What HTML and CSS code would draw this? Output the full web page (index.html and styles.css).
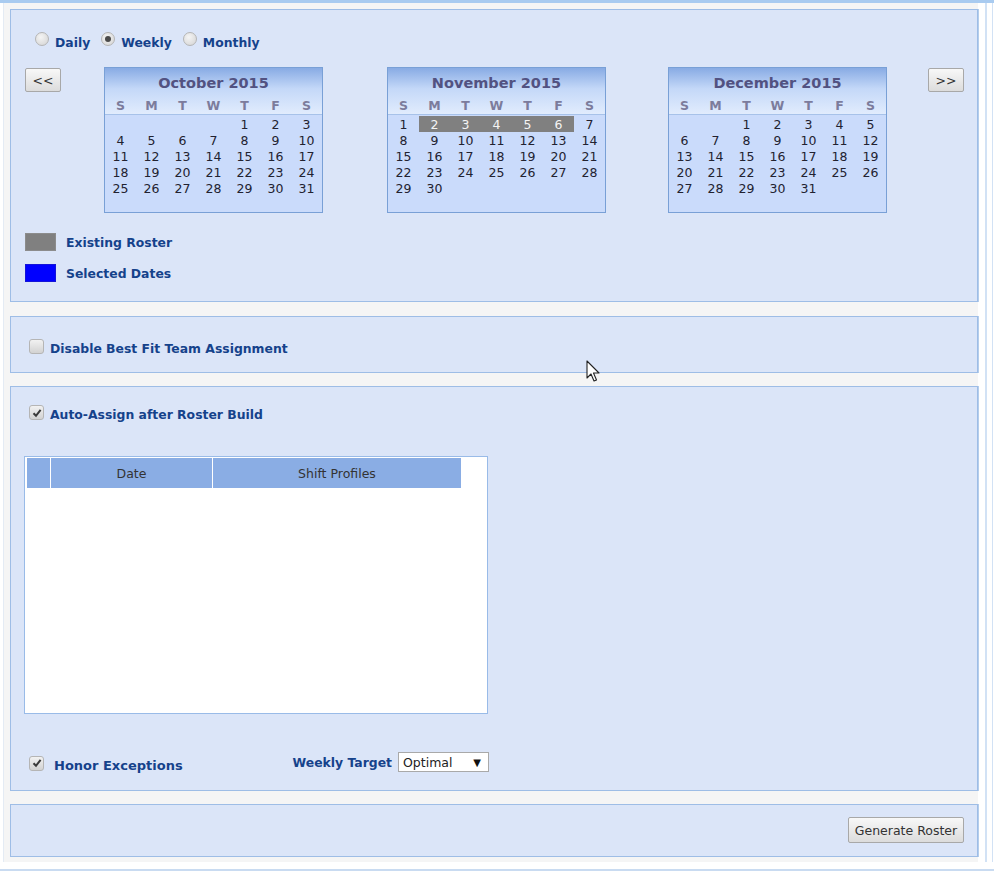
FILE: index.html
```html
<!DOCTYPE html>
<html lang="en">
<head>
  <meta charset="UTF-8" />
  <title>Roster Builder</title>
  <link rel="stylesheet" href="styles.css">
</head>
<body>
  <div class="frame">
    <div class="outer">

      <!-- date range -->
      <div class="panel panel-dates">
        <div class="modes">
          <label class="opt"><span class="radio"></span>Daily</label>
          <label class="opt"><span class="radio on"></span>Weekly</label>
          <label class="opt"><span class="radio"></span>Monthly</label>
        </div>

        <div class="months">
          <button class="btn nav">&lt;&lt;</button>
          <div class="cal" id="cal-oct"></div>
          <div class="cal" id="cal-nov"></div>
          <div class="cal" id="cal-dec"></div>
          <button class="btn nav next">&gt;&gt;</button>
        </div>

        <div class="legend">
          <div class="legend-row"><span class="swatch grey"></span>Existing Roster</div>
          <div class="legend-row"><span class="swatch blue"></span>Selected Dates</div>
        </div>
      </div>

      <div class="panel panel-fit">
        <label class="chk"><span class="box"></span>Disable Best Fit Team Assignment</label>
      </div>

      <div class="panel panel-assign">
        <label class="chk"><span class="box checked"><svg viewBox="0 0 10 10"><path d="M1.5 5.2 L4 7.8 L8.6 1.8" /></svg></span>Auto-Assign after Roster Build</label>

        <div class="grid">
          <div class="grid-head">
            <div class="gh gh-sel"></div>
            <div class="gh gh-date">Date</div>
            <div class="gh gh-shift">Shift Profiles</div>
          </div>
        </div>

        <div class="options">
          <label class="chk honor"><span class="box checked"><svg viewBox="0 0 10 10"><path d="M1.5 5.2 L4 7.8 L8.6 1.8" /></svg></span>Honor Exceptions</label>
          <div class="target">
            <span class="target-label">Weekly Target</span>
            <div class="select"><span>Optimal</span><span class="arrow">&#9660;</span></div>
          </div>
        </div>
      </div>

      <div class="panel panel-actions">
        <button class="btn generate">Generate Roster</button>
      </div>

    </div>
    <div class="rail"></div>
  </div>

  <svg class="cursor" width="14" height="23" viewBox="0 0 14 23">
    <path d="M1 1 L1 18 L5 14 L8 21 L10.5 20 L7.5 13 L13 13 Z" fill="#fff" stroke="#222" stroke-width="1.1" stroke-linejoin="round" />
  </svg>

  <script>
    const months = [
      { id: "cal-oct", title: "October 2015", start: 4, days: 31 },
      { id: "cal-nov", title: "November 2015", start: 0, days: 30, existing: [2, 3, 4, 5, 6] },
      { id: "cal-dec", title: "December 2015", start: 2, days: 31 }
    ];
    const letters = ["S", "M", "T", "W", "T", "F", "S"];

    months.forEach(m => {
      const el = document.getElementById(m.id);
      let html = '<div class="cal-head"><div class="cal-title">' + m.title + '</div><div class="cal-days">';
      letters.forEach(l => { html += "<span>" + l + "</span>"; });
      html += '</div></div><div class="cal-body">';
      for (let i = 0; i < m.start; i++) html += "<span></span>";
      for (let d = 1; d <= m.days; d++) {
        const ex = m.existing && m.existing.includes(d);
        html += '<span' + (ex ? ' class="ex"' : '') + '>' + d + '</span>';
      }
      html += "</div>";
      el.innerHTML = html;
    });
  </script>
</body>
</html>
```

FILE: styles.css
```css
body {
  margin: 0;
  background: #fff;
  font-family: "DejaVu Sans", Verdana, sans-serif;
  color: #15428b;
  position: relative;
}
.frame {
  display: flex;
  border-top: 3px solid #a9cbf0;
  border-bottom: 2px solid #c9dbf1;
  padding-bottom: 7px;
  width: 994px;
  box-sizing: border-box;
}
.outer {
  margin-left: 3px;
  width: 975px;
  border-left: 1px solid #e4ebf4;
  background: #f5f5f5;
  padding: 6px 0 5px 6px;
  box-sizing: border-box;
}
.rail {
  margin-left: 7px;
  width: 5px;
  border-left: 2px solid #d2e2f5;
  border-right: 1px solid #d2e2f5;
}
.panel {
  background: #dbe5f8;
  border: 1px solid #9ebde6;
  box-shadow: 1px 0 0 #b4cdec;
}
.panel + .panel {
  margin-top: 13px;
}

/* top panel */
.panel-dates {
  height: 293px;
  box-sizing: border-box;
  padding: 22px 13px 0 14px;
}
.modes {
  display: flex;
  padding-left: 10px;
  height: 18px;
  align-items: center;
}
.opt {
  display: flex;
  align-items: center;
  font-weight: bold;
  font-size: 12.4px;
  margin-right: 11px;
  position: relative;
  top: 1px;
}
.radio {
  width: 14px;
  height: 14px;
  border-radius: 50%;
  border: 1px solid #b5b5b5;
  background: radial-gradient(circle at 40% 35%, #f4f4f4, #d3d3d3);
  margin-right: 6px;
  position: relative;
  top: -3px;
  box-sizing: border-box;
}
.radio.on::after {
  content: "";
  position: absolute;
  left: 3px;
  top: 3px;
  width: 6px;
  height: 6px;
  border-radius: 50%;
  background: #4a4a4a;
}
.months {
  display: flex;
  align-items: flex-start;
  margin-top: 17px;
}
.btn {
  font-family: "DejaVu Sans", Verdana, sans-serif;
  font-size: 12.5px;
  color: #333;
  border: 1px solid #a8a8a8;
  border-radius: 2px;
  background: linear-gradient(#f8f8f8, #dcdcdc);
  padding: 0;
  cursor: pointer;
}
.nav {
  width: 36px;
  height: 24px;
  margin-top: 1px;
}
.nav.next {
  margin-left: auto;
}
.cal {
  width: 219px;
  border: 1px solid #79a0d6;
  background: #cadbfb;
  box-sizing: border-box;
}
#cal-oct { margin-left: 43px; }
#cal-nov { margin-left: 64px; }
#cal-dec { margin-left: 62px; }
.cal-head {
  background: linear-gradient(#88abe4, #c4d8f8 45%, #e1ecfd);
  border-bottom: 1px solid #a7c2e9;
  padding-top: 5px;
  height: 41px;
}
.cal-title {
  text-align: center;
  font-weight: bold;
  font-size: 14.5px;
  line-height: 20px;
  color: #525281;
}
.cal-days {
  display: grid;
  grid-template-columns: repeat(7, 31px);
  margin-top: 5px;
}
.cal-days span {
  text-align: center;
  font-weight: bold;
  font-size: 12.5px;
  line-height: 16px;
  color: #7c7c9c;
}
.cal-body {
  display: grid;
  grid-template-columns: repeat(7, 31px);
  grid-auto-rows: 16px;
  padding: 1px 0 16px;
}
.cal-body span {
  text-align: center;
  font-size: 12.5px;
  line-height: 17px;
  color: #222230;
}
.cal-body span.ex {
  background: #808080;
  color: #f4f4f4;
}
.legend {
  margin-top: 20px;
}
.legend-row {
  display: flex;
  align-items: center;
  font-weight: bold;
  font-size: 12.4px;
  height: 18px;
}
.legend-row + .legend-row {
  margin-top: 13px;
}
.swatch {
  width: 31px;
  height: 18px;
  margin-right: 10px;
  box-sizing: border-box;
}
.swatch.grey {
  background: #808080;
  border: 1px solid #8c8c8c;
}
.swatch.blue {
  background: #0000ff;
  border: 1px solid #1414d8;
}

/* checkboxes */
.chk {
  display: flex;
  align-items: center;
  font-weight: bold;
  font-size: 12.4px;
}
.box {
  width: 15px;
  height: 15px;
  border: 1px solid #b5b5b5;
  border-radius: 3px;
  background: linear-gradient(#f2f2f2, #d2d2d2);
  box-sizing: border-box;
  margin-right: 6px;
  position: relative;
  top: -2px;
  display: flex;
  align-items: center;
  justify-content: center;
}
.box svg {
  width: 10px;
  height: 10px;
}
.box svg path {
  fill: none;
  stroke: #3a3a3a;
  stroke-width: 2;
}
.panel-fit {
  height: 57px;
  box-sizing: border-box;
  padding: 24px 0 0 18px;
}
.panel.panel-fit {
  margin-top: 14px;
}

.panel-assign {
  height: 405px;
  box-sizing: border-box;
  padding: 20px 0 0 18px;
}
.grid {
  margin: 34px 0 0 -5px;
  width: 464px;
  height: 258px;
  border: 1px solid #99bbe8;
  background: #fff;
  box-sizing: border-box;
  padding: 1px 0 0 2px;
}
.grid-head {
  display: flex;
  height: 30px;
}
.gh {
  background: #8aade4;
  font-size: 12.5px;
  color: #333;
  line-height: 31px;
  text-align: center;
  margin-right: 1px;
}
.gh-sel { width: 23px; }
.gh-date { width: 161px; }
.gh-shift { width: 248px; }

.options {
  display: flex;
  align-items: center;
  margin-top: 41px;
  width: 460px;
}
.honor {
  font-size: 13px;
}
.honor .box {
  margin-right: 10px;
}
.target {
  display: flex;
  align-items: center;
  margin-left: auto;
  position: relative;
  top: -3px;
}
.target-label {
  font-weight: bold;
  font-size: 12.4px;
  margin-right: 6px;
}
.select {
  width: 91px;
  height: 20px;
  border: 1px solid #a9a9a9;
  background: #fff;
  box-sizing: border-box;
  display: flex;
  align-items: center;
  justify-content: space-between;
  padding: 0 7px 0 4px;
  font-size: 12.5px;
  color: #222;
}
.select .arrow {
  font-size: 10px;
  color: #111;
}

.panel-actions {
  height: 53px;
  box-sizing: border-box;
  display: flex;
  justify-content: flex-end;
  align-items: flex-start;
  padding: 12px 13px 0 0;
}
.generate {
  width: 116px;
  height: 26px;
  font-size: 12.5px;
}

.cursor {
  position: absolute;
  left: 586px;
  top: 360px;
}
```
